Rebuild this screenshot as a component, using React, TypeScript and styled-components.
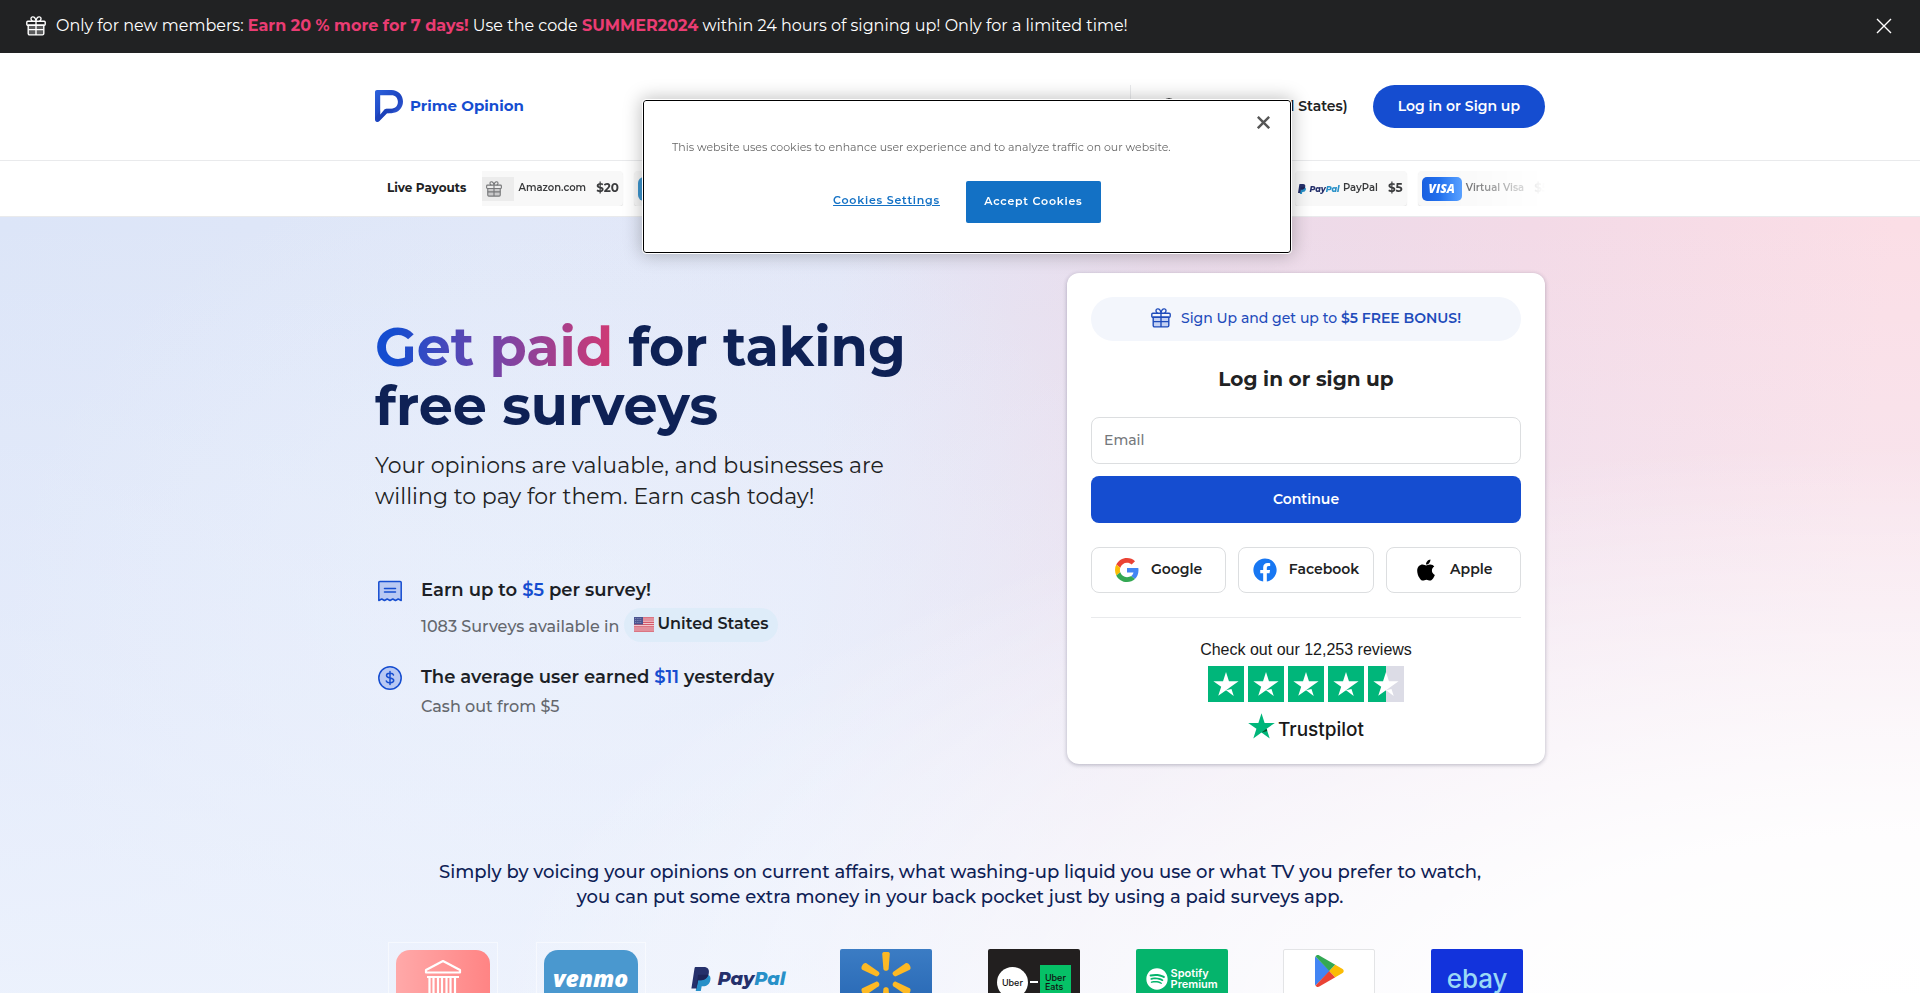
import React from 'react';
import styled, { createGlobalStyle } from 'styled-components';
import { FaApple, FaFacebook, FaSpotify } from 'react-icons/fa';

const BLUE = '#154dd0';
const NAVY = '#0e2155';
const INK = '#212223';
const TRUST = '#00b67a';

const GlobalStyle = createGlobalStyle`
  *, *::before, *::after { box-sizing: border-box; }
  body { margin: 0; background: #fff; color: ${INK}; }
  body, button, input { font-family: Montserrat, Inter, "Open Sans", sans-serif; }
  h1, h2, h3, p { margin: 0; }
  button { cursor: pointer; padding: 0; border: 0; background: none; color: inherit; }
  svg { display: block; flex: none; }
`;

const Page = styled.div`
  min-height: 100vh;
  max-height: 100vh;
  overflow: hidden;
  display: flex;
  flex-direction: column;
`;

const Container = styled.div`
  width: 100%;
  max-width: 1170px;
  margin: 0 auto;
`;

/* Promo bar */

const PromoBar = styled.div`
  flex: none;
  display: flex;
  align-items: center;
  gap: 10px;
  height: 53px;
  padding: 0 26px 2px;
  background: ${INK};
  color: #fff;
  font-size: 16px;
  line-height: 24px;
`;

const Highlight = styled.strong`
  color: #ea3c73;
  font-weight: 700;
`;

const PromoClose = styled.button`
  margin-left: auto;
  padding: 2px;
`;

/* Header */

const Header = styled.header`
  flex: none;
  border-bottom: 1px solid #e9eaec;
`;

const HeaderInner = styled(Container)`
  display: flex;
  align-items: center;
  height: 107px;
`;

const Logo = styled.a`
  display: flex;
  align-items: center;
  gap: 7px;
  padding-bottom: 2px;
  color: ${BLUE};
  font-size: 15px;
  font-weight: 700;
  text-decoration: none;
`;

const HeaderActions = styled.div`
  display: flex;
  align-items: center;
  gap: 25px;
  height: 43px;
  margin-left: auto;
  padding-left: 30px;
  border-left: 1px solid #e9eaec;
`;

const LanguageButton = styled.button`
  display: flex;
  align-items: center;
  gap: 6px;
  padding-bottom: 2px;
  font-size: 14px;
  font-weight: 600;
`;

const LoginButton = styled.button`
  height: 43px;
  padding: 0 25px 2px;
  border-radius: 22px;
  background: ${BLUE};
  color: #fff;
  font-size: 14px;
  font-weight: 600;
`;

/* Live payouts */

const Payouts = styled.section`
  flex: none;
  border-bottom: 1px solid #e9eaec;
`;

const PayoutsInner = styled(Container)`
  display: flex;
  align-items: center;
  gap: 16px;
  height: 55px;
  padding-left: 12px;
`;

const PayoutsTitle = styled.h3`
  flex: none;
  padding-bottom: 2px;
  font-size: 12px;
  font-weight: 700;
`;

const TickerWindow = styled.div`
  flex: 1;
  overflow: hidden;
  mask-image: linear-gradient(to right, #000 90%, transparent);
`;

const Ticker = styled.div`
  display: flex;
  gap: 11px;
  margin: 0 -8px 0 -12px;
`;

const PayoutItem = styled.div<{ $end?: boolean }>`
  flex: none;
  display: flex;
  align-items: center;
  height: 35px;
  padding: 0 4px;
  margin-left: ${p => (p.$end ? 'auto' : '0')};
  border-radius: 4px;
  background: #f8f8f8;
  box-shadow: 0 1px 1px #e2e2e2;
`;

const PayoutLogo = styled.div<{ $bg: string; $radius?: number }>`
  display: flex;
  align-items: center;
  justify-content: center;
  width: 40px;
  height: 24px;
  border-radius: ${p => p.$radius ?? 0}px;
  background: ${p => p.$bg};
`;

const PayoutName = styled.span`
  margin: 0 10px 2px 4px;
  font-size: 10px;
  font-weight: 600;
  color: #3a3b3d;
`;

const PayoutAmount = styled.span`
  padding-bottom: 2px;
  font-size: 12px;
  font-weight: 700;
  color: #3a3b3d;
`;

const VisaWord = styled.span`
  color: #fff;
  font: italic 900 12px "Open Sans", sans-serif;
`;

/* Hero */

const Hero = styled.main`
  flex: 1 0 auto;
  padding-top: 56px;
  background:
    radial-gradient(ellipse 75% 72% at 100% 100%, #fff 0%, rgba(255, 255, 255, 0.9) 32%, rgba(255, 255, 255, 0) 100%),
    linear-gradient(to bottom, rgba(240, 245, 255, 0) 0%, rgba(240, 244, 254, 0.45) 60%, rgba(240, 245, 254, 0.8) 100%),
    radial-gradient(ellipse 30% 60% at 30% 50%, rgba(233, 241, 252, 0.6), rgba(233, 241, 252, 0)),
    linear-gradient(97deg, #dce5f8 0%, #e0e7f8 25%, #e2e6f7 42%, #eadbea 58%, #f3dae7 76%, #fbdee6 94%);
`;

const HeroInner = styled(Container)`
  display: flex;
  justify-content: space-between;
  align-items: flex-start;
`;

const Pitch = styled.div`
  padding-top: 45px;
`;

const Headline = styled.h1`
  max-width: 560px;
  color: ${NAVY};
  font-size: 54px;
  line-height: 59px;
  font-weight: 700;
`;

const GradientText = styled.span`
  background: linear-gradient(90deg, ${BLUE} 8%, #7444a8 50%, #d03a74 100%);
  background-clip: text;
  -webkit-background-clip: text;
  color: transparent;
`;

const Lead = styled.p`
  max-width: 540px;
  margin-top: 14px;
  font-size: 22px;
  line-height: 31px;
`;

const Features = styled.ul`
  display: flex;
  flex-direction: column;
  gap: 24px;
  margin: 67px 0 0;
  padding: 0 0 0 3px;
  list-style: none;
`;

const Feature = styled.li`
  display: flex;
  align-items: flex-start;
  gap: 19px;
`;

const FeatureTitle = styled.h3`
  font-size: 18px;
  line-height: 22px;
  font-weight: 600;
  color: #1c1f26;
`;

const Amount = styled.span`
  color: ${BLUE};
`;

const FeatureText = styled.p`
  display: flex;
  align-items: flex-end;
  gap: 5px;
  margin-top: 4px;
  font-size: 16px;
  line-height: 30px;
  font-weight: 500;
  color: #64676d;
`;

const CountryPill = styled.span`
  display: flex;
  align-items: center;
  gap: 3px;
  height: 34px;
  margin-top: 3px;
  padding: 0 10px 2px;
  border-radius: 17px;
  background: #deecf9;
  color: #1c1f26;
  font-weight: 600;
`;

/* Sign-up card */

const Card = styled.form`
  display: flex;
  flex-direction: column;
  width: 478px;
  padding: 24px 24px 25px;
  border-radius: 12px;
  background: #fff;
  box-shadow: 0 1px 4px rgba(30, 30, 60, 0.3);
`;

const Bonus = styled.div`
  display: flex;
  align-items: center;
  justify-content: center;
  gap: 10px;
  height: 44px;
  padding-bottom: 2px;
  border-radius: 22px;
  background: #f3f6fc;
  color: #1f4cbb;
  font-size: 14px;
  font-weight: 500;

  strong { font-weight: 600; }
`;

const CardTitle = styled.h2`
  margin: 26px 0;
  font-size: 20px;
  line-height: 24px;
  font-weight: 700;
  text-align: center;
`;

const HiddenLabel = styled.label`
  position: absolute;
  width: 1px;
  height: 1px;
  overflow: hidden;
  clip-path: inset(50%);
`;

const EmailInput = styled.input`
  width: 100%;
  height: 47px;
  padding: 0 12px 2px;
  border: 1px solid #dcdee0;
  border-radius: 8px;
  background: #fff;
  font-size: 14px;
  font-weight: 500;

  &::placeholder { color: #75787c; opacity: 1; }
`;

const ContinueButton = styled.button`
  height: 47px;
  margin: 12px 0 24px;
  padding-bottom: 2px;
  border-radius: 8px;
  background: ${BLUE};
  color: #fff;
  font-size: 14px;
  font-weight: 600;
`;

const SocialRow = styled.div`
  display: grid;
  grid-template-columns: repeat(3, 1fr);
  gap: 12px;
  padding-bottom: 24px;
  border-bottom: 1px solid #e9eaec;
`;

const SocialButton = styled.button`
  display: flex;
  align-items: center;
  justify-content: center;
  gap: 12px;
  height: 46px;
  border: 1px solid #dcdee0;
  border-radius: 8px;
  font-size: 14px;
  font-weight: 600;

  span { padding-bottom: 2px; }
`;

const Reviews = styled.a`
  display: flex;
  flex-direction: column;
  align-items: center;
  padding-top: 22px;
  color: #191919;
  font: 400 16px/20px "Liberation Sans", Arial, sans-serif;
  text-decoration: none;
`;

const Stars = styled.div`
  display: flex;
  gap: 4px;
  margin: 6px 0 10px;
`;

const TrustLogo = styled.div`
  display: flex;
  align-items: center;
  gap: 3px;
  height: 27px;
  font: 500 19px/23px Inter, "Liberation Sans", sans-serif;

  span { padding-top: 8px; }
`;

/* Brands */

const Intro = styled.p`
  max-width: 1060px;
  margin: 96px auto 32px;
  color: ${NAVY};
  font-size: 18px;
  line-height: 25px;
  font-weight: 500;
  text-align: center;
`;

const Brands = styled.div`
  display: grid;
  grid-template-columns: repeat(8, 1fr);
  justify-items: center;
  width: 100%;
  max-width: 1182px;
  margin: 0 auto;
`;

const BrandFrame = styled.div<{ $framed?: boolean }>`
  padding: ${p => (p.$framed ? 7 : 6)}px;
  border: 1px solid ${p => (p.$framed ? 'rgba(255, 255, 255, 0.5)' : 'transparent')};
`;

const BrandTile = styled.div<{ $bg: string; $round?: boolean; $line?: boolean }>`
  display: flex;
  align-items: center;
  justify-content: center;
  width: ${p => (p.$round ? 94 : 92)}px;
  height: 60px;
  padding-bottom: ${p => (p.$line ? 16 : 0)}px;
  border: ${p => (p.$line ? '1px solid #e3e4e6' : '0')};
  border-radius: ${p => (p.$round ? '14px' : '2px')};
  background: ${p => p.$bg};
`;

const VenmoWord = styled.span`
  padding-bottom: 4px;
  color: #fff;
  font: italic 900 23px/24px "Open Sans", sans-serif;
`;

const PayPalWord = styled.span<{ $size: number }>`
  font: italic 800 ${p => p.$size}px/1 Montserrat, "Open Sans", sans-serif;
  color: #25306b;

  span { color: #2790c8; }
`;

const PayPalMark = styled.div<{ $gap: number }>`
  display: flex;
  align-items: center;
  gap: ${p => p.$gap}px;
`;

const UberRow = styled.div`
  display: flex;
  align-items: center;
  padding-top: 6px;
`;

const UberDisc = styled.span`
  display: flex;
  align-items: center;
  justify-content: center;
  width: 31px;
  height: 31px;
  border-radius: 50%;
  background: #fff;
  color: #111;
  font: 500 9px/1 Inter, sans-serif;
`;

const UberDash = styled.span`
  width: 8px;
  height: 2px;
  margin: 0 2px;
  background: #fff;
`;

const UberBox = styled.span`
  display: flex;
  align-items: center;
  justify-content: center;
  width: 31px;
  height: 34px;
  background: #06c167;
  color: #111;
  font: 500 9px/9px Inter, sans-serif;
`;

const SpotifyMark = styled.div`
  display: flex;
  align-items: center;
  gap: 3px;
  color: #fff;
  font: 600 11px/11px Inter, sans-serif;
`;

const EbayWord = styled.span`
  color: #9ad9f6;
  font: 500 26px/30px Inter, sans-serif;
`;

/* Cookie dialog */

const CookieDialog = styled.div`
  position: fixed;
  top: 100px;
  left: calc(50% - 317px);
  width: 648px;
  padding: 38px 28px 29px;
  border: 1px solid #000;
  border-radius: 3px;
  outline: 1px solid #fff;
  background: #fff;
  box-shadow: 0 0 18px 2px rgba(0, 0, 0, 0.25);
`;

const CookieText = styled.p`
  color: #696969;
  font-size: 11px;
  line-height: 17px;
`;

const CookieActions = styled.div`
  display: flex;
  align-items: center;
  justify-content: center;
  gap: 26px;
  margin-top: 25px;
`;

const CookieLink = styled.button`
  padding-bottom: 4px;
  color: #1371c5;
  font-size: 11px;
  font-weight: 600;
  letter-spacing: 0.07em;
  text-decoration: underline;
`;

const CookieAccept = styled.button`
  width: 135px;
  height: 42px;
  padding-bottom: 2px;
  border-radius: 2px;
  background: #1371c5;
  color: #fff;
  font-size: 11px;
  font-weight: 600;
  letter-spacing: 0.07em;
`;

const CookieClose = styled.button`
  position: absolute;
  top: 15px;
  right: 20px;
  color: #565656;
`;

/* Drawings */

const GiftIcon = ({ size = 20, color = '#fff', fill = '#5b5c5d' }: { size?: number; color?: string; fill?: string }) => (
  <svg width={size} height={size} viewBox="0 0 20 20" fill="none" stroke={color} strokeWidth="1.4" strokeLinejoin="round" aria-hidden="true">
    <path d="M2.2 9.3h15.6v8.3a1.3 1.3 0 0 1-1.3 1.3h-13a1.3 1.3 0 0 1-1.3-1.3z" fill={fill} />
    <rect x="0.8" y="5.2" width="18.4" height="4.1" rx="1" />
    <path d="M10 5.2v13.7M2.2 13.6h15.6" />
    <path d="M10 5.2C9.500 1.600 7.800.800 6.600.900 4.400 1.100 4.400 4.300 6.600 5.200M10 5.200c.500-3.600 2.200-4.400 3.400-4.300 2.200.200 2.200 3.400 0 4.300" />
  </svg>
);

const CrossIcon = ({ size, width }: { size: number; width: number }) => (
  <svg width={size} height={size} viewBox="0 0 16 16" fill="none" stroke="currentColor" strokeWidth={width} aria-hidden="true">
    <path d="M1 1l14 14M15 1L1 15" />
  </svg>
);

const LogoMark = () => (
  <svg width="28" height="32" viewBox="0 0 28 32" aria-hidden="true">
    <defs>
      <linearGradient id="mark" x1="0" y1="0" x2="1" y2="1">
        <stop offset="0" stopColor="#2c62dc" />
        <stop offset="0.55" stopColor="#1d44c0" />
        <stop offset="1" stopColor="#3f66dd" />
      </linearGradient>
    </defs>
    <path fill="url(#mark)" fillRule="evenodd" d="M2 0h14.500C23 0 28 5 28 11.600S23 23.200 16.500 23.200H12L4.200 31.300C2.700 32.700 0 32 0 29.800V2C0 .900.900 0 2 0zM5.200 5.200v19.600l4.300-5.200c.500-.600 1.200-.900 2-.900h5c3.700 0 6.400-3 6.400-6.900s-2.700-6.600-6.400-6.600z" />
    <path fill="#1a3bb0" d="M5.200 20.500v4.300l4.300-5.200c.500-.600 1.200-.900 2-.900h5c1.500 0 2.900-.5 4-1.300-1.500 3.600-4.500 5.800-8.500 5.800L4 31.300 0 28z" opacity="0.45" />
  </svg>
);

const GlobeIcon = () => (
  <svg width="16" height="16" viewBox="0 0 16 16" fill="none" stroke="currentColor" strokeWidth="1.300" aria-hidden="true">
    <circle cx="8" cy="8" r="7" />
    <path d="M1 8h14M8 1c-4.500 4-4.500 10 0 14M8 1c4.500 4 4.500 10 0 14" />
  </svg>
);

const PayPalGlyph = ({ width, height }: { width: number; height: number }) => (
  <svg width={width} height={height} viewBox="0 0 20 25" aria-hidden="true">
    <path fill="#2790c8" d="M7 8h10.500c2 1 2.800 3 2.200 5.700-.9 4.300-3.700 6.300-7.600 6.300h-1.400L9.800 25H4.500z" />
    <path fill="#25306b" d="M4.500 0h8.300c4.300 0 6.200 2.600 5.300 6.800-1 4.700-4.100 6.900-8.500 6.900H7L5.300 22.500H0L3.300 1.100C3.400.500 3.900 0 4.500 0z" />
    <path fill="#1c2458" d="M7 8h10.700c-1.500 4-4.500 5.700-8.100 5.700H7L5.300 22.500H4.800z" />
  </svg>
);

const ReceiptIcon = () => (
  <svg width="24" height="24" viewBox="0 0 24 24" fill="none" stroke={BLUE} strokeWidth="1.500" strokeLinejoin="round" strokeLinecap="round" aria-hidden="true">
    <path fill="#b9c9f3" d="M1.800 2.500h20.400a1 1 0 0 1 1 1v18l-3-1.500-2.700 1.500-2.700-1.500-2.800 1.500-2.800-1.500-2.700 1.500L3.800 20 .8 21.500v-18a1 1 0 0 1 1-1z" />
    <path d="M6.500 9.500h11M6.500 13h11" />
  </svg>
);

const DollarIcon = () => (
  <svg width="24" height="24" viewBox="0 0 24 24" fill="none" stroke={BLUE} strokeWidth="1.500" strokeLinecap="round" aria-hidden="true">
    <circle cx="12" cy="12" r="11.200" fill="#b9c9f3" />
    <path d="M12 5.500v13M15.500 9c-.4-1.200-1.600-1.700-3-1.700h-1c-1.800 0-3 .9-3 2.300 0 3.400 7.200 1.400 7.200 4.700 0 1.500-1.300 2.400-3.200 2.400h-1c-1.600 0-2.800-.6-3.200-1.800" />
  </svg>
);

const FlagIcon = () => (
  <svg width="20" height="15" viewBox="0 0 20 15" aria-hidden="true">
    <rect width="20" height="15" rx="1" fill="#f0c9ce" />
    <path d="M0 .8h20M0 3h20M0 5.300h20M0 7.500h20M0 9.800h20M0 12h20M0 14.200h20" stroke="#d4596a" strokeWidth="1.200" />
    <rect width="9" height="7.500" fill="#4b5590" />
    <path d="M1 1.500h7M1 3.500h7M1 5.500h7" stroke="#a9afd0" strokeWidth="0.700" strokeDasharray="0.800 1" />
  </svg>
);

const GoogleIcon = () => (
  <svg width="24" height="24" viewBox="0 0 48 48" aria-hidden="true">
    <path fill="#EA4335" d="M24 9.500c3.540 0 6.710 1.220 9.210 3.600l6.850-6.850C35.900 2.380 30.470 0 24 0 14.620 0 6.510 5.380 2.560 13.220l7.980 6.190C12.430 13.720 17.740 9.500 24 9.500z" />
    <path fill="#4285F4" d="M46.980 24.550c0-1.570-.15-3.090-.38-4.550H24v9.020h12.940c-.58 2.960-2.260 5.480-4.780 7.180l7.730 6c4.510-4.180 7.090-10.360 7.090-17.650z" />
    <path fill="#FBBC05" d="M10.530 28.590c-.48-1.450-.76-2.990-.76-4.590s.27-3.140.76-4.590l-7.980-6.190C.92 16.460 0 20.120 0 24c0 3.880.92 7.540 2.560 10.780l7.970-6.190z" />
    <path fill="#34A853" d="M24 48c6.480 0 11.930-2.130 15.890-5.810l-7.730-6c-2.150 1.450-4.920 2.300-8.160 2.300-6.260 0-11.570-4.220-13.470-9.910l-7.980 6.190C6.510 42.620 14.620 48 24 48z" />
  </svg>
);

const STAR = 'M81.600 40.400H55.900L48 16.200l-7.900 24.200H14.400l20.800 15-7.900 24.200 20.800-15 12.800-9.200zM48 64.700 62.600 61l6.100 18.800z';

const StarBox = ({ half }: { half?: boolean }) => (
  <svg width="36" height="36" viewBox="0 0 96 96" aria-hidden="true">
    <path fill={half ? '#dcdce6' : TRUST} d="M0 0h96v96H0z" />
    {half && <path fill={TRUST} d="M0 0h48v96H0z" />}
    <path fill="#fff" d={STAR} />
  </svg>
);

const TrustStar = () => (
  <svg width="27" height="26" viewBox="14 15.500 68 65.500" aria-hidden="true">
    <path fill={TRUST} d="M81.600 40.400H55.900L48 16.200l-7.900 24.200H14.400l20.800 15-7.900 24.200 20.700-15 20.700 15-7.900-24.200z" />
    <path fill="#005128" d="M62.600 61l-1.800-5.600L48 64.700z" />
  </svg>
);

const BankIcon = () => (
  <svg width="38" height="42" viewBox="0 0 38 42" fill="none" stroke="#fff" strokeWidth="2.200" strokeLinejoin="round" aria-hidden="true">
    <path d="M2 13.500V11L19 2l17 9v2.500z" />
    <path d="M3 18h32M5.500 18v16M9.500 18v16M14 18v16M18 18v16M22.500 18v16M26.500 18v16M31 18v16M2.500 35h33M1 39h36" />
  </svg>
);

const SparkIcon = () => (
  <svg width="50" height="54" viewBox="0 0 50 54" aria-hidden="true">
    <g fill="#fdb924">
      {[0, 60, 120, 180, 240, 300].map(angle => (
        <path key={angle} transform={`rotate(${angle} 25 27)`} d="M21.200 1.800c.2-3 7.400-3 7.600 0l-1.200 15.200c-.2 2.400-5 2.400-5.200 0z" />
      ))}
    </g>
  </svg>
);

const PlayIcon = () => (
  <svg width="29" height="32" viewBox="0 0 29 32" aria-hidden="true">
    <path fill="#4285f4" d="M.5 1.500C.2 2 0 2.500 0 3v26c0 .6.200 1.200.5 1.600L15 16z" />
    <path fill="#34a853" d="M.5 1.500C1.300 0 2.900-.4 4.300.4L20.300 9.800 14.300 16z" />
    <path fill="#ea4335" d="M.5 30.500c.8 1.400 2.400 1.900 3.800 1.100l16-9.400L14.300 16z" />
    <path fill="#fbbc04" d="M20.300 9.800l6.900 4c2 1.200 2 3.400 0 4.500l-6.900 3.900L14.300 16z" />
  </svg>
);

const PayPalBrand = ({ small }: { small?: boolean }) => (
  <PayPalMark $gap={small ? 3 : 6}>
    <PayPalGlyph width={small ? 8 : 20} height={small ? 10 : 24} />
    <PayPalWord $size={small ? 8 : 18}>Pay<span>Pal</span></PayPalWord>
  </PayPalMark>
);

export default function App() {
  return (
    <Page>
      <GlobalStyle />
      <PromoBar>
        <GiftIcon />
        <p>
          Only for new members: <Highlight>Earn 20 % more for 7 days!</Highlight> Use the code{' '}
          <Highlight>SUMMER2024</Highlight> within 24 hours of signing up! Only for a limited time!
        </p>
        <PromoClose type="button" aria-label="Close promotion"><CrossIcon size={16} width={1.4} /></PromoClose>
      </PromoBar>

      <Header>
        <HeaderInner>
          <Logo href="#"><LogoMark />Prime Opinion</Logo>
          <HeaderActions>
            <LanguageButton type="button"><GlobeIcon />English (United States)</LanguageButton>
            <LoginButton type="button">Log in or Sign up</LoginButton>
          </HeaderActions>
        </HeaderInner>
      </Header>

      <Payouts>
        <PayoutsInner>
          <PayoutsTitle>Live Payouts</PayoutsTitle>
          <TickerWindow>
            <Ticker>
              <PayoutItem>
                <PayoutLogo $bg="#ececec"><GiftIcon size={16} color="#77787a" fill="#c9c9ca" /></PayoutLogo>
                <PayoutName>Amazon.com</PayoutName>
                <PayoutAmount>$20</PayoutAmount>
              </PayoutItem>
              <PayoutItem>
                <PayoutLogo $bg="#3d95ce" $radius={6} />
              </PayoutItem>
              <PayoutItem $end>
                <PayoutLogo $bg="transparent"><PayPalBrand small /></PayoutLogo>
                <PayoutName>PayPal</PayoutName>
                <PayoutAmount>$5</PayoutAmount>
              </PayoutItem>
              <PayoutItem>
                <PayoutLogo $bg="linear-gradient(90deg, #1a5fe0, #2b86ff)" $radius={5}><VisaWord>VISA</VisaWord></PayoutLogo>
                <PayoutName>Virtual Visa</PayoutName>
                <PayoutAmount>$5</PayoutAmount>
              </PayoutItem>
            </Ticker>
          </TickerWindow>
        </PayoutsInner>
      </Payouts>

      <Hero>
        <HeroInner>
          <Pitch>
            <Headline><GradientText>Get paid</GradientText> for taking free surveys</Headline>
            <Lead>Your opinions are valuable, and businesses are willing to pay for them. Earn cash today!</Lead>
            <Features>
              <Feature>
                <ReceiptIcon />
                <div>
                  <FeatureTitle>Earn up to <Amount>$5</Amount> per survey!</FeatureTitle>
                  <FeatureText>
                    1083 Surveys available in <CountryPill><FlagIcon />United States</CountryPill>
                  </FeatureText>
                </div>
              </Feature>
              <Feature>
                <DollarIcon />
                <div>
                  <FeatureTitle>The average user earned <Amount>$11</Amount> yesterday</FeatureTitle>
                  <FeatureText>Cash out from $5</FeatureText>
                </div>
              </Feature>
            </Features>
          </Pitch>

          <Card onSubmit={e => e.preventDefault()}>
            <Bonus>
              <GiftIcon color="#1f4cbb" fill="#c5d2f3" />
              <span>Sign Up and get up to <strong>$5 FREE BONUS!</strong></span>
            </Bonus>
            <CardTitle>Log in or sign up</CardTitle>
            <HiddenLabel htmlFor="email">Email</HiddenLabel>
            <EmailInput id="email" type="email" placeholder="Email" />
            <ContinueButton type="submit">Continue</ContinueButton>
            <SocialRow>
              <SocialButton type="button"><GoogleIcon /><span>Google</span></SocialButton>
              <SocialButton type="button"><FaFacebook size={24} color="#1877f2" /><span>Facebook</span></SocialButton>
              <SocialButton type="button"><FaApple size={24} color="#000" /><span>Apple</span></SocialButton>
            </SocialRow>
            <Reviews href="#">
              Check out our 12,253 reviews
              <Stars><StarBox /><StarBox /><StarBox /><StarBox /><StarBox half /></Stars>
              <TrustLogo><TrustStar /><span>Trustpilot</span></TrustLogo>
            </Reviews>
          </Card>
        </HeroInner>

        <Intro>
          Simply by voicing your opinions on current affairs, what washing-up liquid you use or what TV you prefer to
          watch, you can put some extra money in your back pocket just by using a paid surveys app.
        </Intro>

        <Brands>
          <BrandFrame $framed><BrandTile $round $bg="linear-gradient(90deg, #ffa9a9, #ff8484)"><BankIcon /></BrandTile></BrandFrame>
          <BrandFrame $framed><BrandTile $round $bg="#4a98cf"><VenmoWord>venmo</VenmoWord></BrandTile></BrandFrame>
          <BrandFrame><BrandTile $bg="transparent"><PayPalBrand /></BrandTile></BrandFrame>
          <BrandFrame><BrandTile $bg="linear-gradient(#3b7cc4, #2767b4)"><SparkIcon /></BrandTile></BrandFrame>
          <BrandFrame>
            <BrandTile $bg="#221f1f">
              <UberRow><UberDisc>Uber</UberDisc><UberDash /><UberBox>Uber<br />Eats</UberBox></UberRow>
            </BrandTile>
          </BrandFrame>
          <BrandFrame>
            <BrandTile $bg="#05b46c">
              <SpotifyMark><FaSpotify size={22} /><span>Spotify<br />Premium</span></SpotifyMark>
            </BrandTile>
          </BrandFrame>
          <BrandFrame><BrandTile $line $bg="#fff"><PlayIcon /></BrandTile></BrandFrame>
          <BrandFrame><BrandTile $bg="#1233dc"><EbayWord>ebay</EbayWord></BrandTile></BrandFrame>
        </Brands>
      </Hero>

      <CookieDialog role="dialog" aria-label="Cookie notice">
        <CookieClose type="button" aria-label="Close"><CrossIcon size={13} width={3} /></CookieClose>
        <CookieText>This website uses cookies to enhance user experience and to analyze traffic on our website.</CookieText>
        <CookieActions>
          <CookieLink type="button">Cookies Settings</CookieLink>
          <CookieAccept type="button">Accept Cookies</CookieAccept>
        </CookieActions>
      </CookieDialog>
    </Page>
  );
}
